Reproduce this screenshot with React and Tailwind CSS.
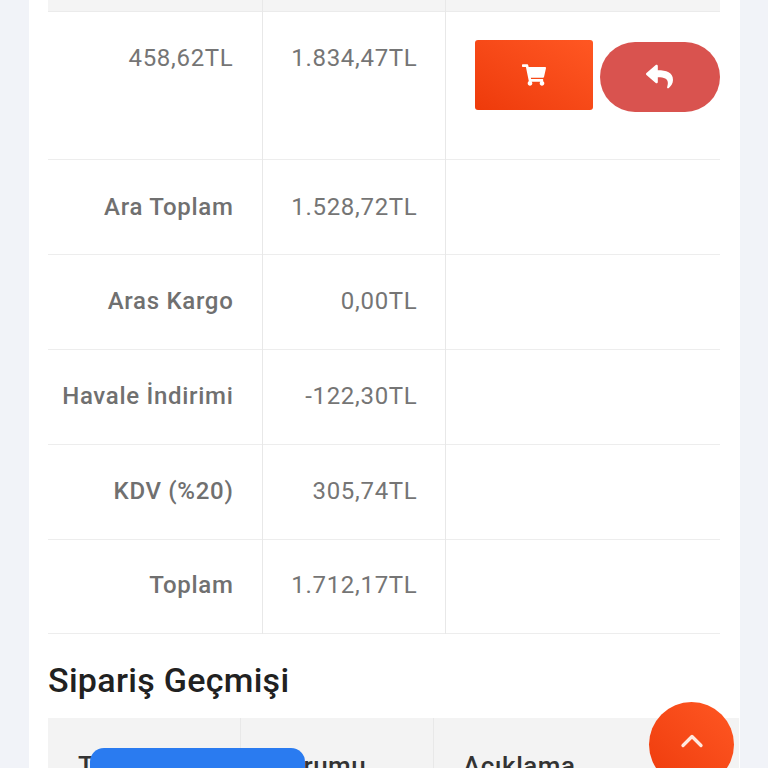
import { FaShoppingCart, FaReply } from "react-icons/fa";
import { ChevronUp } from "lucide-react";

const totals = [
  { label: "Ara Toplam", value: "1.528,72TL", height: "h-[95px]", pad: "" },
  { label: "Aras Kargo", value: "0,00TL", height: "h-[95px]", pad: "pb-[2px]" },
  { label: "Havale İndirimi", value: "-122,30TL", height: "h-[95px]", pad: "pb-[2px]" },
  { label: "KDV (%20)", value: "305,74TL", height: "h-[95px]", pad: "pb-[2px]" },
  { label: "Toplam", value: "1.712,17TL", height: "h-[94px]", pad: "pb-[2px]" },
];

export default function App() {
  return (
    <div className="relative h-[768px] w-[768px] overflow-hidden bg-[#f1f3f8] font-['Roboto',sans-serif]">
      <div className="ml-[29px] h-[768px] w-[711px] bg-white pl-[19px]">
        <table className="w-[672px] table-fixed border-collapse">
          <colgroup>
            <col className="w-[214px]" />
            <col className="w-[183px]" />
            <col className="w-[275px]" />
          </colgroup>
          <tbody>
            <tr className="h-[11px] border-b border-[#ebebeb] bg-[#f4f4f4]">
              <td className="border-r border-[#e8e8e8]"></td>
              <td className="border-r border-[#e8e8e8]"></td>
              <td></td>
            </tr>
            <tr className="h-[148px] border-b border-[#ededed]">
              <td className="border-r border-[#e8e8e8] pt-[31px] pr-[28px] text-right align-top text-[24px] leading-[30px] tracking-[0.7px] text-[#757575]">
                458,62TL
              </td>
              <td className="border-r border-[#e8e8e8] pt-[31px] pr-[27px] text-right align-top text-[24px] leading-[30px] tracking-[0.7px] text-[#757575]">
                1.834,47TL
              </td>
              <td className="pt-[28px] pl-[29px] align-top">
                <div className="flex items-start gap-[7px]">
                  <button className="flex h-[70px] w-[118px] items-center justify-center rounded-[3px] bg-gradient-to-tr from-[#ee3a0a] to-[#ff5722] text-white">
                    <FaShoppingCart className="text-[24px]" />
                  </button>
                  <button className="mt-[2px] flex h-[70px] w-[120px] items-center justify-center rounded-full bg-[#d9534f] text-white">
                    <FaReply className="text-[27px]" />
                  </button>
                </div>
              </td>
            </tr>
            {totals.map((row) => (
              <tr key={row.label} className={`${row.height} border-b border-[#ededed]`}>
                <td className={`${row.pad} border-r border-[#e8e8e8] pr-[28px] text-right text-[24px] font-medium tracking-[0.7px] text-[#707070]`}>
                  {row.label}
                </td>
                <td className={`${row.pad} border-r border-[#e8e8e8] pr-[27px] text-right text-[24px] tracking-[0.7px] text-[#757575]`}>
                  {row.value}
                </td>
                <td></td>
              </tr>
            ))}
          </tbody>
        </table>

        <h2 className="mt-[25px] text-[34px] leading-[42px] font-medium tracking-[0.3px] text-[#212121]">Sipariş Geçmişi</h2>

        <div className="mt-[17px] grid h-[60px] w-[691px] grid-cols-[193px_193px_305px] bg-[#f3f3f3] text-[26px] font-medium tracking-[0.5px] text-[#333333]">
          <div className="border-r border-[#e8e8e8] pt-[29px] pl-[30px]">Tarih</div>
          <div className="border-r border-[#e8e8e8] pt-[29px] pl-[30px]">Durumu</div>
          <div className="pt-[29px] pl-[29px]">Açıklama</div>
        </div>
      </div>

      <div className="absolute top-[748px] left-[90px] h-[40px] w-[215px] rounded-[14px] bg-[#2a7bf0]"></div>
      <button className="absolute top-[702px] left-[649px] flex h-[85px] w-[85px] items-start justify-center rounded-full bg-gradient-to-tr from-[#ee3a0a] to-[#ff5722] pt-[21px] text-[#ffe9df]">
        <ChevronUp size={36} strokeWidth={2.2} />
      </button>
    </div>
  );
}
